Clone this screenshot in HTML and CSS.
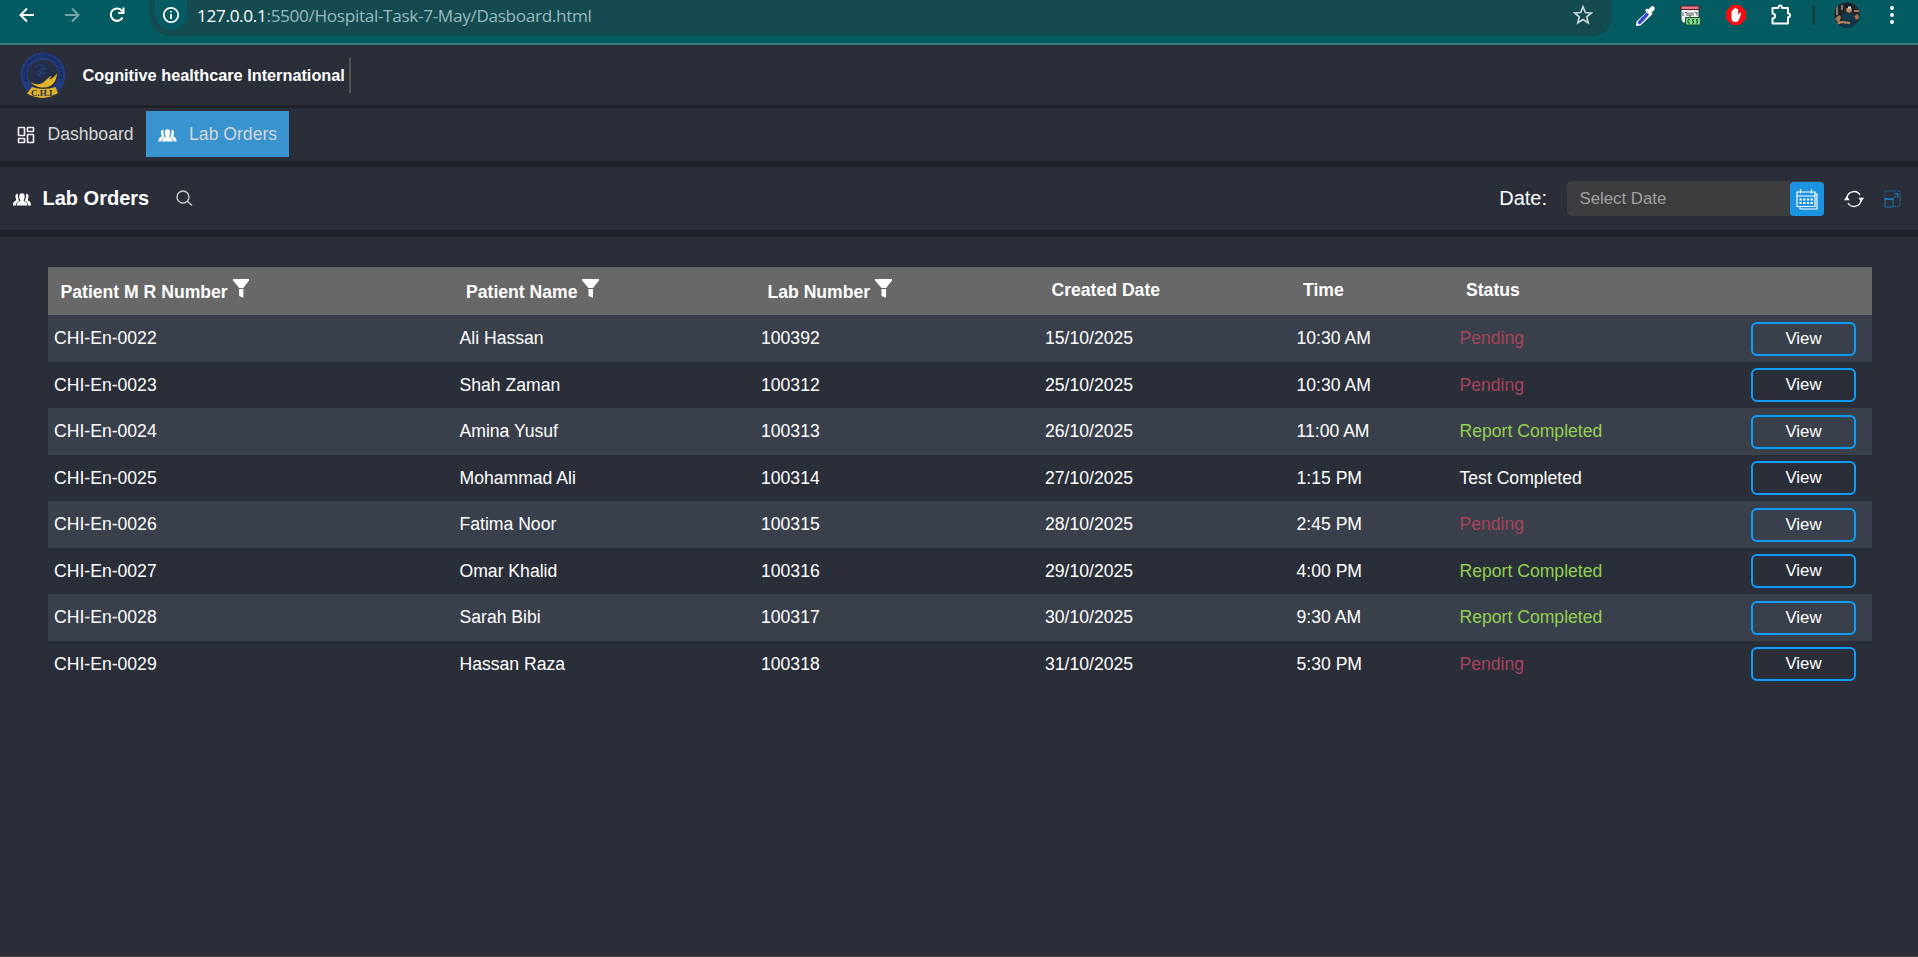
FILE: index.html
```html
<!DOCTYPE html>
<html lang="en">
<head>
<meta charset="utf-8">
<title>Lab Orders</title>
<link rel="stylesheet" href="styles.css">
</head>
<body>
<svg class="defs" width="0" height="0">
  <symbol id="people" viewBox="0 0 18 13">
    <path d="M5 .8C2.200.4 2 3.600 3 6c.3 1 .1 1.500-.7 2C.6 8.800 0 9.500 0 12.500h3c.1-2.500.6-3.300 2.500-4.100.7-.3.8-.8.4-1.600C5 5 4.600 3 5 .8zM13 .8C15.800.4 16 3.600 15 6c-.3 1-.1 1.500.7 2 1.700.8 2.300 1.500 2.300 4.500h-3c-.1-2.500-.6-3.300-2.500-4.100-.7-.3-.8-.8-.4-1.600.9-1.800 1.300-3.800.9-6z"/>
    <path d="M9 .3c3 0 3.400 3.700 1.900 6.300-.5.900-.2 1.500.7 1.900 1.900.7 2.700 1.300 2.700 4H3.700c0-2.700.8-3.300 2.700-4 .9-.4 1.200-1 .7-1.900C5.600 4 6 .3 9 .3z"/>
  </symbol>
  <symbol id="funnel" viewBox="0 0 17 20"><path d="M0 0h17v1.500L11 9v9.700L6.500 17V9L0 1.500z"/><path class="funnel-gap" d="M5.500 9.500h6"/></symbol>
</svg>

<div class="browser">
  <div class="browser-nav">
    <svg width="18" height="18" viewBox="0 0 18 18"><path d="M16 9H3M9 2.500 2.500 9 9 15.500"/></svg>
    <svg class="dim" width="18" height="18" viewBox="0 0 18 18"><path d="M2 9h13M9 2.500 15.500 9 9 15.500"/></svg>
    <svg width="18" height="18" viewBox="0 0 18 18"><path d="M14.500 11.500A6.200 6.200 0 1 1 14 5l1 1.500M15.500 1.500v5.500H10"/></svg>
  </div>
  <div class="address">
    <span class="info"><svg width="18" height="18" viewBox="0 0 18 18"><circle cx="9" cy="9" r="7.200"/><path d="M9 8v5M9 5v1.500"/></svg></span>
    <span class="url"><b>127.0.0.1</b>:5500/Hospital-Task-7-May/Dasboard.html</span>
    <svg class="star" width="20" height="20" viewBox="0 0 20 20"><path d="m10 1.800 2.300 5.700 6.100.4-4.700 3.900 1.500 6-5.200-3.300-5.200 3.300 1.500-6L1.600 7.900l6.100-.4z"/></svg>
  </div>
  <div class="extensions">
    <svg width="22" height="22" viewBox="0 0 22 22"><path d="m11 5 2-1.500 1.500 1 2.500-2.700c2.200-1.600 5 1 3.200 3.200L17.500 7.500l1 1.500-2 2L6.500 20.500 2 21l.5-4.500L12.500 7z" fill="#fff"/><path d="m5.500 17.500 7.500-8" stroke="#3949c8" stroke-width="3.400" stroke-linecap="round"/></svg>
    <svg width="21" height="21" viewBox="0 0 21 21"><path d="M1 1h18v17H3L1 15z" fill="#eee" stroke="#244"/><path d="M1 1h18v3.500H1z" fill="#f2748a" stroke="#522"/><path d="M3 7.500v3.500M5 7.500h2v3.500M9 7.500v3.500h2V7.500M13 7.500v3M15 7.500h2v3" stroke="#555" fill="none"/><path d="M5.500 12.500h15v7.500h-15z" fill="#7fdc8f" stroke="#174b2a"/><path d="M10 14.500H8v3.500h2M14 14.500h-1.500v1.500h1v2H12M18 14.500h-1.500v1.500h1v2H16" stroke="#174b2a" fill="none"/></svg>
    <svg width="20" height="20" viewBox="0 0 20 20"><path d="M6 0h8l6 6v8l-6 6H6l-6-6V6z" fill="#f40d12"/><path d="M5.500 10V6.200c0-1 1.500-1 1.500 0V4.500c0-1 1.700-1 1.700 0v-1c0-1 1.700-1 1.700 0v1c0-1 1.700-1 1.700 0V10l1.500-2c1-.8 1.900 0 1.400 1l-2 5.500c-.7 2-2 2.500-3.700 2.500-2.500 0-3.800-1.500-3.800-4z" fill="#fff"/></svg>
    <svg width="22" height="22" viewBox="0 0 22 22"><path d="M2.500 5h6C8 1.700 12.500 1.700 12 5h6v5.500c2.800-.3 2.800 4 0 3.700V20.500h-15.500v-5.200c3.500 0 3.500-4.800 0-4.800z" fill="none" stroke="#fff" stroke-width="2" stroke-linejoin="round"/></svg>
    <i class="divider"></i>
    <svg class="avatar" width="26" height="26" viewBox="0 0 26 26"><defs><clipPath id="round"><circle cx="13" cy="13" r="12.700"/></clipPath></defs><g clip-path="url(#round)"><path d="M0 0h26v26H0z" fill="#24252a"/><path d="M2 4h2v9H2zM7 3h2v5H7z" fill="#8b7568"/><path d="M20 8h5v2h-5zM1 17l4-4 2 2-2 6zM20 14l4-2 1 4-3 2z" fill="#a8785b"/><path d="M8 12q6-3 11 0l3 6-2 8H7l1-6z" fill="#12364a"/><circle cx="15" cy="8" r="2.800" fill="#b98a68"/><path d="M11.500 6V2q4-2 6.500 1v3z" fill="#101d25"/><path d="M14 4.500h3V6.500h-3z" fill="#dde"/><path d="m3 22 4-2 9 1" stroke="#c58a60" stroke-width="2" fill="none"/></g></svg>
    <svg width="6" height="20" viewBox="0 0 6 20" fill="#fff"><circle cx="3" cy="3" r="1.900"/><circle cx="3" cy="10" r="1.900"/><circle cx="3" cy="17" r="1.900"/></svg>
  </div>
</div>

<header class="brand">
  <svg class="logo" width="48" height="48" viewBox="0 0 48 48">
    <defs><path id="arc" d="M9.500 31A16.500 16.500 0 1 1 38.500 31"/></defs>
    <circle cx="24" cy="24" r="18.800" fill="none" stroke="#223b7d" stroke-width="7.500"/>
    <circle cx="23.500" cy="22.500" r="11.500" fill="#222d4b"/>
    <path d="M15 17q5-5 10-2l-3 2 5 1-7 2 6 2-8 1 5 3" fill="none" stroke="#263c70" stroke-width="1.400"/>
    <text class="motto"><textPath href="#arc" startOffset="1.500">REDEFINING HEALTHCARE</textPath></text>
    <path d="M11.500 31c6 3.500 10 2.500 14-.5 3-3 5-5 7.500-6l-3 4c4-1 6-4 8-6-.5 9-6 14-13 14-6 0-11-2-13.500-5.500z" fill="#e0b22c"/>
    <path d="m13 36q11 4 23.500 0l2.500 6q-15 9.500-31 .5z" fill="#e0b22c"/>
    <text class="logo-name" x="24" y="45">C.H.I.</text>
  </svg>
  <span class="brand-name">Cognitive healthcare International</span>
</header>

<nav class="tabs">
  <a class="tab"><svg width="18" height="18" viewBox="0 0 18 18" class="grid-icon"><rect x="1.500" y="1.500" width="6" height="8" rx=".5"/><rect x="10.500" y="1.500" width="6" height="4" rx=".5"/><rect x="1.500" y="12.500" width="6" height="4" rx=".5"/><rect x="10.500" y="8.500" width="6" height="8" rx=".5"/></svg><span>Dashboard</span></a>
  <a class="tab active"><svg width="19" height="13"><use href="#people"/></svg><span>Lab Orders</span></a>
</nav>

<section class="toolbar">
  <svg class="title-icon" width="18" height="13"><use href="#people"/></svg>
  <h1>Lab Orders</h1>
  <svg class="search" width="17" height="17" viewBox="0 0 17 17"><circle cx="7" cy="7" r="6"/><path d="m11.300 11.300 4.700 4.200"/></svg>
  <label>Date:</label>
  <div class="date"><span>Select Date</span>
    <div class="calendar"><svg width="22" height="22" viewBox="0 0 22 22"><path d="M4 18.500v2.500h17V6h-2"/><path d="M1 4h18v14.500H1zM1 8h18M4.500 1v4.500M15.500 1v4.500"/><path d="M3.500 11.500h13.500M3.500 15h13.500" stroke-dasharray="2.200 1.500" stroke-width="1.800"/></svg></div>
  </div>
  <svg class="refresh" width="20" height="18" viewBox="0 0 20 18"><path d="M3 8.500A7 7 0 0 1 16 5M17 9.500A7 7 0 0 1 4 13"/><path class="tip" d="m2.800 6 3 4.200H0zM17.200 12l2.800-4.200h-5.600z"/></svg>
  <svg class="expand" width="17" height="18" viewBox="0 0 17 18"><path class="dots" d="M1 9V1h15v15.500H9"/><path d="M.5 9H9"/><path class="thin" d="M1 9v8h8V9M9 9l5-5.500M10 3.500h4V8"/></svg>
</section>

<main>
  <table>
    <colgroup><col class="c1"><col class="c2"><col class="c3"><col class="c4"><col class="c5"><col class="c6"><col class="c7"></colgroup>
    <thead><tr>
      <th>Patient M R Number <svg width="16" height="20" viewBox="0 0 17 20" preserveAspectRatio="none"><use href="#funnel" width="17" height="20"/></svg></th>
      <th>Patient Name <svg width="17" height="20"><use href="#funnel"/></svg></th>
      <th>Lab Number <svg width="17" height="20"><use href="#funnel"/></svg></th>
      <th class="plain">Created Date</th><th class="plain">Time</th><th class="plain">Status</th><th></th>
    </tr></thead>
    <tbody>
      <tr><td>CHI-En-0022</td><td>Ali Hassan</td><td>100392</td><td>15/10/2025</td><td>10:30 AM</td><td class="pending">Pending</td><td><button>View</button></td></tr>
      <tr><td>CHI-En-0023</td><td>Shah Zaman</td><td>100312</td><td>25/10/2025</td><td>10:30 AM</td><td class="pending">Pending</td><td><button>View</button></td></tr>
      <tr><td>CHI-En-0024</td><td>Amina Yusuf</td><td>100313</td><td>26/10/2025</td><td>11:00 AM</td><td class="done">Report Completed</td><td><button>View</button></td></tr>
      <tr><td>CHI-En-0025</td><td>Mohammad Ali</td><td>100314</td><td>27/10/2025</td><td>1:15 PM</td><td>Test Completed</td><td><button>View</button></td></tr>
      <tr><td>CHI-En-0026</td><td>Fatima Noor</td><td>100315</td><td>28/10/2025</td><td>2:45 PM</td><td class="pending">Pending</td><td><button>View</button></td></tr>
      <tr><td>CHI-En-0027</td><td>Omar Khalid</td><td>100316</td><td>29/10/2025</td><td>4:00 PM</td><td class="done">Report Completed</td><td><button>View</button></td></tr>
      <tr><td>CHI-En-0028</td><td>Sarah Bibi</td><td>100317</td><td>30/10/2025</td><td>9:30 AM</td><td class="done">Report Completed</td><td><button>View</button></td></tr>
      <tr><td>CHI-En-0029</td><td>Hassan Raza</td><td>100318</td><td>31/10/2025</td><td>5:30 PM</td><td class="pending">Pending</td><td><button>View</button></td></tr>
    </tbody>
  </table>
</main>
</body>
</html>
```
FILE: styles.css
```css
* { box-sizing: border-box; }
body { margin: 0; height: 957px; overflow: hidden; background: #2a2e39; color: #fff; font-family: "Liberation Sans", Arial, sans-serif; border-bottom: 1px solid #4a4648; }
svg { display: block; flex: none; }
.defs { position: absolute; }

.browser { display: flex; height: 45px; background: #045b61; border-bottom: 2px solid #3c7c82; }
.browser-nav { display: flex; gap: 27px; width: 150px; padding: 6px 0 0 18px; }
.browser-nav svg { fill: none; stroke: #fff; stroke-width: 2; }
.browser-nav .dim { opacity: .45; }
.address { display: flex; width: 1462px; height: 36px; padding-right: 19px; background: #134b51; border-radius: 0 0 20px 20px; }
.info { display: flex; justify-content: center; width: 32px; height: 30px; margin-left: 5px; padding-top: 6px; background: #045b61; border-radius: 0 0 16px 16px; }
.info svg { fill: none; stroke: #fff; stroke-width: 1.800; }
.url { flex: 1; margin-left: 10px; color: #9ab9bb; font: 17.200px/31px "Open Sans", "Noto Sans", sans-serif; letter-spacing: -.340px; white-space: nowrap; }
.url b { color: #fff; font-weight: 400; }
.star { margin-top: 5px; fill: none; stroke: #c9d3d3; stroke-width: 1.700; }
.extensions { display: flex; align-items: flex-start; flex: 1; padding: 5px 0 0 22px; }
.extensions svg:nth-of-type(2) { margin-left: 24px; }
.extensions svg:nth-of-type(3) { margin-left: 25px; }
.extensions svg:nth-of-type(4) { margin: -2px 0 0 24px; }
.divider { width: 3px; height: 20px; margin-left: 20px; background: #134247; }
.extensions .avatar { margin: -3px 0 0 19px; }
.extensions svg:last-child { margin: 0 0 0 29px; }

.brand { display: flex; height: 63px; padding: 6px 0 0 19px; border-bottom: 3px solid #1f212a; }
.motto { fill: #14244f; font-size: 4.900px; font-weight: 700; letter-spacing: -.100px; }
.logo-name { fill: #26304a; font: 700 9px "Liberation Serif", serif; text-anchor: middle; }
.brand-name { height: 35px; margin: 7px 0 0 15.500px; padding-right: 4.500px; border-right: 2px solid #555350; font-size: 16.300px; font-weight: 700; line-height: 34px; }

.tabs { display: flex; height: 59px; padding: 3px 0 0 4px; border-bottom: 6px solid #1f212a; }
.tab { display: flex; align-items: center; height: 46px; padding: 0 12px 0 12.500px; gap: 13px; color: #d5d6d8; font-size: 17.600px; }
.active { padding: 0 12px; fill: #fff; background: #3893cf; gap: 12.500px; }
.active svg { margin-top: 2px; }
.grid-icon { margin-top: 2px; fill: none; stroke: #eee; stroke-width: 1.700; }

.toolbar { display: flex; align-items: center; height: 70px; padding: 0 17px 0 13px; border-bottom: 7px solid #1f212a; }
.title-icon { margin-top: 1px; fill: #fff; }
h1 { margin: 0 0 0 11.500px; font-size: 20px; font-weight: 700; }
.search { margin: 0 auto 0 27px; fill: none; stroke: #ccc; stroke-width: 1.400; }
label { font-size: 20px; }
.date { display: flex; width: 257px; height: 35px; margin-left: 20px; padding-left: 12.500px; background: #3d3d40; border-radius: 5px; color: #a0a0a1; font-size: 16.800px; line-height: 35px; justify-content: space-between; }
.calendar { display: grid; place-items: center; width: 34px; height: 34px; margin-top: 1px; background: #1b92e2; border-radius: 4px; }
.calendar svg { fill: none; stroke: #fff; stroke-width: 1.200; }
.refresh { margin-left: 20px; fill: none; stroke: #fff; stroke-width: 1.300; }
.refresh .tip { fill: #fff; stroke: none; }
.expand { margin-left: 20px; fill: none; stroke: #168fe0; stroke-width: 1.400; }
.expand .thin { stroke-width: 1; opacity: .7; }
.expand .dots { stroke-width: 1; stroke-dasharray: 1.500 1; opacity: .75; }

main { padding: 30px 46px 0 48px; }
table { width: 1824px; table-layout: fixed; border-collapse: collapse; font-size: 17.600px; }
.c1 { width: 405.500px; }
.c2 { width: 301.500px; }
.c3 { width: 284px; }
.c4 { width: 251.500px; }
.c5 { width: 163px; }
.c6 { width: 291.500px; }
.c7 { width: 127px; }
th { height: 48px; padding: 0 0 3px 12.500px; background: #686868; text-align: left; font-weight: 700; }
.plain { padding-bottom: 2px; }
th svg { display: inline-block; margin: 2px 0 -1px; fill: #fff; }
.funnel-gap { stroke: #686868; stroke-width: 1; }
td { height: 46.500px; padding: 1px 0 0 6px; white-space: nowrap; }
tbody tr:nth-child(odd) { background: #3a404b; }
.pending { color: #a6435a; }
.done { color: #92d050; }
button { display: block; width: 105px; height: 34px; margin: 0; padding: 0; background: transparent; border: 2px solid #0d9efc; border-radius: 6px; color: #fff; font: 16.800px "Liberation Sans", Arial, sans-serif; }
```
